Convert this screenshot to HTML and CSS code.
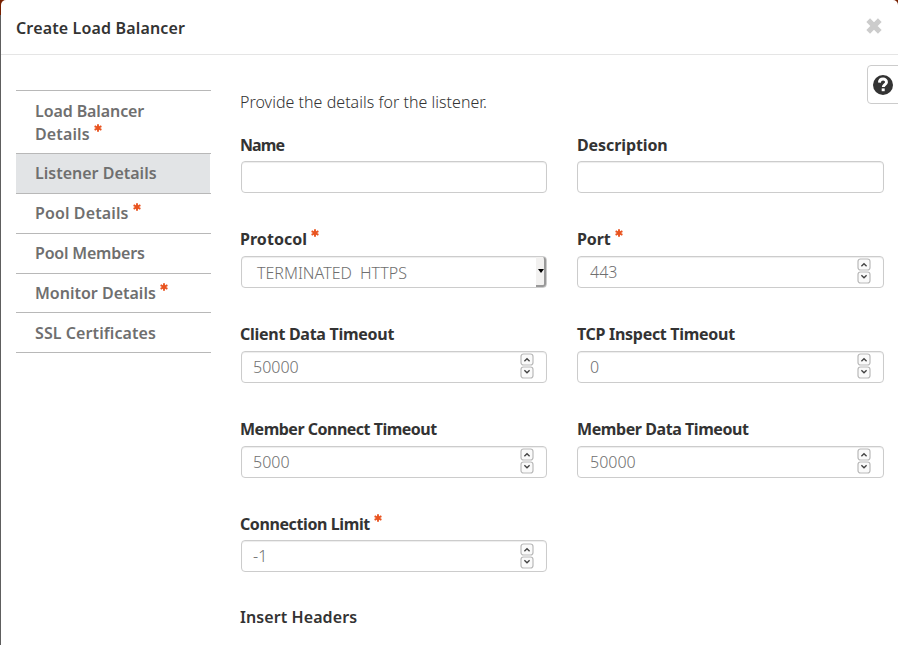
FILE: index.html
```
<!DOCTYPE html>
<html lang="en">
<head>
<meta charset="utf-8">
<title>Create Load Balancer</title>
<link rel="stylesheet" href="styles.css">
</head>
<body>
<svg width="0" height="0" class="defs">
  <symbol id="star" viewBox="0 0 8 8"><path d="M4 .2V7.8M.6 2.2L7.4 5.8M.6 5.8L7.4 2.2" stroke="#e95420" stroke-width="1.9"/></symbol>
  <symbol id="spin" viewBox="0 0 14 26">
    <rect x="1" y="1" width="12" height="11" rx="2.5" fill="#fafafa" stroke="#b9b9b9" stroke-width="1.2"/>
    <rect x="1" y="14" width="12" height="11" rx="2.5" fill="#fafafa" stroke="#b9b9b9" stroke-width="1.2"/>
    <path d="M4.4 8.2L7 5.8L9.6 8.2M4.4 17.3L7 19.7L9.6 17.3" fill="none" stroke="#444" stroke-width="1.4"/>
  </symbol>
</svg>
<div class="modal">
  <header class="head">
    <h1><span class="t-title">Create Load Balancer</span></h1>
    <svg class="close" viewBox="0 0 18 18"><path d="M3.2 3.2L14.8 14.8M14.8 3.2L3.2 14.8" stroke="#ccc" stroke-width="5.2"/></svg>
  </header>
  <div class="content">
    <nav class="nav">
      <a class="two"><span class="t-lb">Load Balancer</span><br><span class="t-det">Details</span><svg class="star"><use href="#star"/></svg></a>
      <a class="active"><span class="t-ld">Listener Details</span></a>
      <a><span class="t-pd">Pool Details</span><svg class="star"><use href="#star"/></svg></a>
      <a><span class="t-pm">Pool Members</span></a>
      <a><span class="t-md">Monitor Details</span><svg class="star"><use href="#star"/></svg></a>
      <a><span class="t-ssl">SSL Certificates</span></a>
    </nav>
    <main class="main">
      <p class="intro"><span class="t-intro">Provide the details for the listener.</span></p>
      <div class="grid">
        <div class="field"><label><span class="t-name">Name</span></label><div class="input"></div></div>
        <div class="field"><label><span class="t-desc">Description</span></label><div class="input"></div></div>
        <div class="field"><label><span class="t-prot">Protocol</span><svg class="star"><use href="#star"/></svg></label>
          <div class="input select"><span class="t-term">TERMINATED</span><span class="t-https">HTTPS</span><i class="arrow"></i></div></div>
        <div class="field"><label><span class="t-port">Port</span><svg class="star"><use href="#star"/></svg></label><div class="input"><span>443</span><svg class="spin"><use href="#spin"/></svg></div></div>
        <div class="field"><label><span class="t-cdt">Client Data Timeout</span></label><div class="input"><span>50000</span><svg class="spin"><use href="#spin"/></svg></div></div>
        <div class="field"><label><span class="t-tcp">TCP Inspect Timeout</span></label><div class="input"><span>0</span><svg class="spin"><use href="#spin"/></svg></div></div>
        <div class="field"><label><span class="t-mct">Member Connect Timeout</span></label><div class="input"><span>5000</span><svg class="spin"><use href="#spin"/></svg></div></div>
        <div class="field"><label><span class="t-mdt">Member Data Timeout</span></label><div class="input"><span>50000</span><svg class="spin"><use href="#spin"/></svg></div></div>
        <div class="field"><label><span class="t-cl">Connection Limit</span><svg class="star"><use href="#star"/></svg></label><div class="input last"><span>-1</span><svg class="spin"><use href="#spin"/></svg></div></div>
      </div>
      <div class="insert"><span class="t-ins">Insert Headers</span></div>
    </main>
  </div>
  <div class="help"><svg viewBox="0 0 20 20"><circle cx="10" cy="10" r="10" fill="#333"/><path d="M6.4 7.6C6.6 2.9 13.6 3 13.5 7.2C13.4 9.5 10.3 9.8 10.3 12" fill="none" stroke="#fff" stroke-width="2.9"/><rect x="8.7" y="13.4" width="3" height="2.8" fill="#fff"/></svg></div>
</div>
</body>
</html>
```
FILE: styles.css
```
* { box-sizing: border-box; }
body {
  margin: 0;
  height: 645px;
  overflow: hidden;
  background: linear-gradient(#772000 0 15px, #5e5e5e 15px);
  padding-left: 1px;
  font: 16px/23px "Noto Sans", "Open Sans", sans-serif;
  color: #333;
}
.defs { position: absolute; }
.modal { position: relative; height: 645px; background: #fff; border-radius: 5px 5px 0 0; overflow: hidden; }
.head {
  height: 55px;
  border-bottom: 1px solid #e5e5e5;
  padding: 0 15px 0 15px;
  display: flex;
  justify-content: space-between;
  align-items: center;
}
h1 { margin: 2px 0 0; font-size: 16px; font-weight: 600; line-height: 23px; white-space: nowrap; }
.close { width: 18px; height: 18px; margin: -2px 0 0; }
.content { display: flex; padding: 35px 14px 0 15px; }
.nav { width: 195px; flex: none; border-top: 1px solid #b8b8b8; height: 263px; }
.nav a {
  display: block;
  height: 39.85px;
  padding: 8.3px 0 0 19px;
  border-bottom: 1px solid #b8b8b8;
  color: #6f6f6f;
  font-weight: 600;
  white-space: nowrap;
}
.nav .two { height: 63px; padding-top: 9px; }
.nav .active { background: linear-gradient(#e2e4e6, #e2e4e6) 0 0 / 194px 100% no-repeat; }
.star { width: 8px; height: 8px; margin-left: 4px; vertical-align: 8px; }
.main { flex: 1; padding-left: 29px; white-space: nowrap; }
.intro { margin: 1px 0 19.6px; font-weight: 300; }
.grid { display: grid; grid-template-columns: 307px 307px; column-gap: 30px; }
.field { height: 94.85px; }
label { display: block; height: 27.4px; font-weight: 700; }
.t-title { letter-spacing: .15px; }
.t-lb { letter-spacing: -.1px; }
.t-det, .t-pd { letter-spacing: .12px; }
.t-pm { letter-spacing: -.2px; }
.t-ssl { letter-spacing: .08px; }
.t-intro { letter-spacing: .03px; }
.t-name { letter-spacing: -.9px; }
.t-desc { letter-spacing: -.1px; }
.t-prot { letter-spacing: .05px; }
.t-port { letter-spacing: -.1px; }
.t-cdt { letter-spacing: -.28px; }
.t-tcp { letter-spacing: -.3px; }
.t-mct { letter-spacing: -.5px; }
.t-mdt { letter-spacing: -.43px; }
.t-cl { letter-spacing: -.4px; }
.t-ins { letter-spacing: .08px; }
.input {
  width: 306px;
  height: 32px;
  margin-left: 1px;
  border: 1px solid #ccc;
  border-radius: 4px;
  box-shadow: inset 0 1px 1px rgba(0, 0, 0, .075);
  padding: 0 12px 0 11px;
  display: flex;
  align-items: center;
  justify-content: space-between;
  font-weight: 300;
  color: #6f6f6f;
}
.input > span { padding-top: 2px; }
.last > span { padding-top: 0; }
.field:nth-child(2n) .input { margin-left: 0; width: 307px; padding-left: 12px; }
.select { padding: 1px 0 0 15px; justify-content: flex-start; }
.t-https { margin-left: 8px; }
.arrow {
  width: 10px;
  height: 30px;
  margin: -1px 0 0 auto;
  background: #f2f1f0;
  border-right: 2px solid #999;
  border-bottom: 2px solid #999;
  border-radius: 0 3px 3px 0;
  display: flex;
  align-items: center;
}
.arrow::before { content: ""; margin-left: 2px; border: 3px solid transparent; border-top: 4px solid #000; border-bottom: 0; }
.spin { width: 14px; height: 26px; margin-top: -1px; }
.insert { margin-top: -2px; font-weight: 600; }
.help {
  position: absolute;
  top: 65px;
  right: -5px;
  width: 36px;
  height: 39px;
  border: 1px solid #ccc;
  border-radius: 4px;
  padding: 9px 0 0 5px;
}
.help svg { display: block; width: 20px; height: 20px; }
```
